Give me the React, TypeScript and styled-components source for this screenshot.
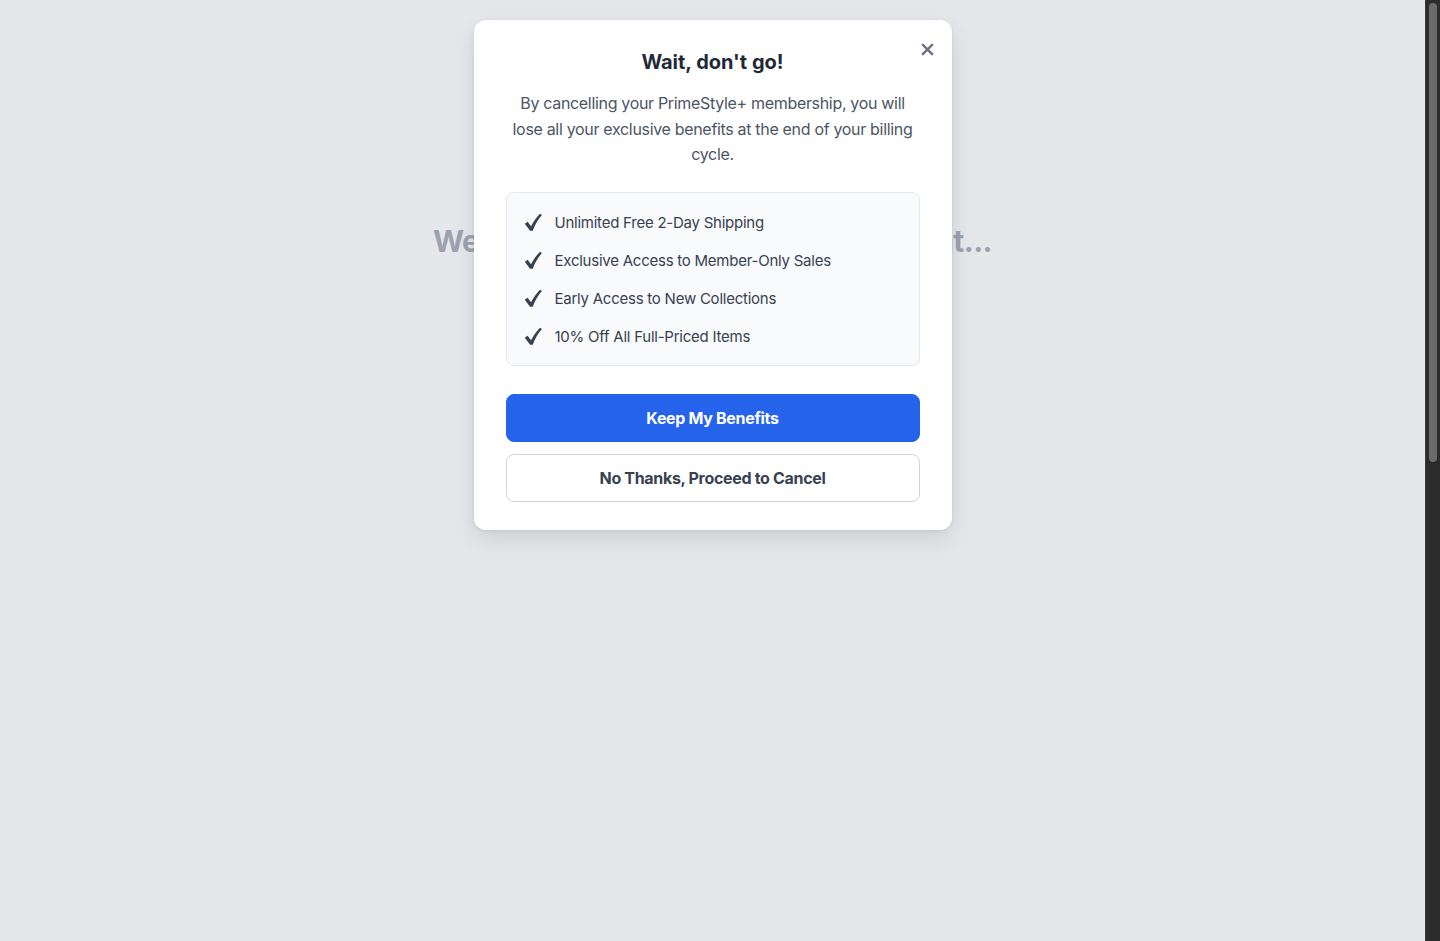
import React from "react";
import styled, { createGlobalStyle } from "styled-components";

const GlobalStyle = createGlobalStyle`
  html, body {
    margin: 0;
    padding: 0;
    background: #e5e7eb;
    font-family: Inter, "Noto Sans", "Liberation Sans", sans-serif;
    overflow: hidden;
  }
  * { box-sizing: border-box; }
`;

const Shell = styled.div`
  display: flex;
  height: 100vh;
`;

const Viewport = styled.div`
  position: relative;
  flex: 1;
  background: #e5e7eb;
  display: flex;
  flex-direction: column;
  align-items: center;
  padding-top: 219px;
`;

const ScrollTrack = styled.div`
  width: 15px;
  flex: none;
  background: #2c2c2c;
  border-left: 1px solid #3a3a3a;
  padding: 3px 3px 0 3px;
`;

const ScrollThumb = styled.div`
  width: 8px;
  height: 459px;
  border-radius: 5px;
  background: #6b6b6b;
`;

const PageTitle = styled.h1`
  margin: 0;
  font-size: 30px;
  line-height: 44px;
  font-weight: 700;
  letter-spacing: -0.6px;
  color: #9ca3af;
  white-space: nowrap;
`;

const Overlay = styled.div`
  position: absolute;
  inset: 0;
  display: flex;
  justify-content: center;
  align-items: flex-start;
  padding-top: 20px;
`;

const Modal = styled.div`
  position: relative;
  width: 478px;
  background: #ffffff;
  border-radius: 12px;
  padding: 28px 32px;
  box-shadow: 0 10px 25px rgba(0, 0, 0, 0.1), 0 1px 4px rgba(0, 0, 0, 0.08);
  text-align: center;
  letter-spacing: -0.015em;
`;

const CloseButton = styled.button`
  position: absolute;
  top: 18px;
  right: 13px;
  width: 22px;
  height: 22px;
  border: 0;
  background: none;
  padding: 0;
  display: flex;
  align-items: center;
  justify-content: center;
  cursor: pointer;
  color: #6b7280;
`;

const Title = styled.h2`
  margin: 0;
  font-size: 20px;
  line-height: 28px;
  font-weight: 700;
  letter-spacing: 0;
  color: #1f2937;
`;

const Text = styled.p`
  margin: 15px 0 0;
  font-size: 16px;
  line-height: 25.6px;
  letter-spacing: -0.02em;
  color: #4b5563;
`;

const Benefits = styled.ul`
  list-style: none;
  margin: 24px 0 0;
  padding: 18px 17px 16px;
  background: #f9fafb;
  border: 1px solid #e5e7eb;
  border-radius: 8px;
  display: flex;
  flex-direction: column;
  gap: 14px;
  text-align: left;
`;

const Benefit = styled.li`
  display: flex;
  align-items: center;
  gap: 12px;
  font-size: 15px;
  line-height: 24px;
  color: #374151;
`;

const Check = styled.svg`
  width: 19px;
  height: 19px;
  flex: none;
  color: #374151;
`;

const Actions = styled.div`
  margin-top: 28px;
  display: flex;
  flex-direction: column;
  gap: 12px;
`;

const Button = styled.button<{ $primary?: boolean }>`
  height: 48px;
  width: 100%;
  border-radius: 8px;
  font-family: inherit;
  font-size: 16px;
  font-weight: 700;
  letter-spacing: -0.02em;
  cursor: pointer;
  border: 1px solid ${(p) => (p.$primary ? "#2563eb" : "#d1d5db")};
  background: ${(p) => (p.$primary ? "#2563eb" : "#ffffff")};
  color: ${(p) => (p.$primary ? "#ffffff" : "#374151")};
`;

const benefits = [
  "Unlimited Free 2-Day Shipping",
  "Exclusive Access to Member-Only Sales",
  "Early Access to New Collections",
  "10% Off All Full-Priced Items",
];

const CheckIcon = () => (
  <Check viewBox="0 0 20 20" fill="currentColor">
    <path d="M0.8 11.2 L3.8 9.2 L7.4 14 C10 9 13.2 4.4 16.9 0.9 L18.9 2.1 C15 6.6 11.6 12 9.2 18.6 L6.4 18.6 Z" />
  </Check>
);

const App: React.FC = () => {
  return (
    <>
      <GlobalStyle />
      <Shell>
        <Viewport>
          <PageTitle>Welcome back! Loading your account...</PageTitle>
          <Overlay>
            <Modal>
              <CloseButton aria-label="Close">
                <svg width="13" height="13" viewBox="0 0 14 14" fill="none">
                  <path d="M2 2 L12 12 M12 2 L2 12" stroke="currentColor" strokeWidth="2.6" strokeLinecap="round" />
                </svg>
              </CloseButton>
              <Title>Wait, don't go!</Title>
              <Text>
                By cancelling your PrimeStyle+ membership, you will lose all your exclusive benefits at the end of
                your billing cycle.
              </Text>
              <Benefits>
                {benefits.map((b) => (
                  <Benefit key={b}>
                    <CheckIcon />
                    {b}
                  </Benefit>
                ))}
              </Benefits>
              <Actions>
                <Button $primary>Keep My Benefits</Button>
                <Button>No Thanks, Proceed to Cancel</Button>
              </Actions>
            </Modal>
          </Overlay>
        </Viewport>
        <ScrollTrack>
          <ScrollThumb />
        </ScrollTrack>
      </Shell>
    </>
  );
};

export default App;
